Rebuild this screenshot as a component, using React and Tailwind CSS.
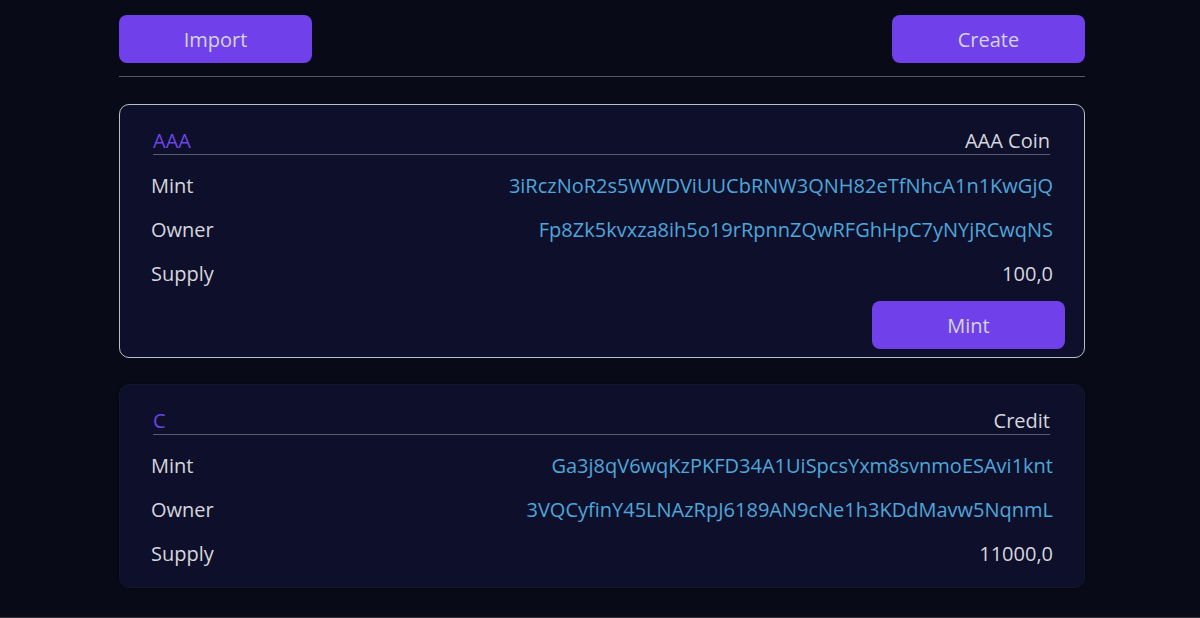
import React from "react";

const tokens = [
  {
    symbol: "AAA",
    name: "AAA Coin",
    mint: "3iRczNoR2s5WWDViUUCbRNW3QNH82eTfNhcA1n1KwGjQ",
    owner: "Fp8Zk5kvxza8ih5o19rRpnnZQwRFGhHpC7yNYjRCwqNS",
    supply: "100,0",
    canMint: true,
  },
  {
    symbol: "C",
    name: "Credit",
    mint: "Ga3j8qV6wqKzPKFD34A1UiSpcsYxm8svnmoESAvi1knt",
    owner: "3VQCyfinY45LNAzRpJ6189AN9cNe1h3KDdMavw5NqnmL",
    supply: "11000,0",
    canMint: false,
  },
];

function Row({ label, value, blue }) {
  return (
    <div className="flex h-[44px] items-center justify-between">
      <span className="text-[#d6d6de]">{label}</span>
      <span className={blue ? "text-[#4ea6db]" : "text-[#d6d6de]"}>{value}</span>
    </div>
  );
}

function Card({ t }) {
  return (
    <div
      className={
        "rounded-[10px] border bg-[#0e0f2a] " +
        (t.canMint ? "border-[#bdbdc6] pb-[8px]" : "border-[#15162c] pb-[11px] shadow-[0_0_3px_rgba(0,0,0,0.6)]")
      }
    >
      <div className="pl-[31px] pr-[31px]">
        <div className="ml-[2px] mr-[3px] flex items-center justify-between border-b border-[#5a5a6e] pb-[1px] pt-[24px] leading-[24px]">
          <span className="text-[#6a46e6]">{t.symbol}</span>
          <span className="text-[#d6d6de]">{t.name}</span>
        </div>
        <div className="mt-[9px]">
          <Row label="Mint" value={t.mint} blue />
          <Row label="Owner" value={t.owner} blue />
          <Row label="Supply" value={t.supply} />
        </div>
      </div>
      {t.canMint && (
        <div className="mt-[5px] flex justify-end pr-[19px]">
          <button className="h-[48px] w-[193px] rounded-lg bg-[#7041ea] pt-[2px] text-[#d4d4dc]">Mint</button>
        </div>
      )}
    </div>
  );
}

export default function App() {
  return (
    <div
      className="h-[618px] overflow-hidden border-b border-[#34343c] bg-[#080a17] pl-[119px] pt-[15px] text-[20px]"
      style={{ fontFamily: '"Open Sans", sans-serif' }}
    >
      <div className="w-[966px]">
        <div className="flex justify-between">
          <button className="h-[48px] w-[193px] rounded-lg bg-[#7041ea] pt-[2px] text-[#d4d4dc]">Import</button>
          <button className="h-[48px] w-[193px] rounded-lg bg-[#7041ea] pt-[2px] text-[#d4d4dc]">Create</button>
        </div>
        <div className="mt-[13px] h-px bg-[#5a5a62]" />
        <div className="mt-[27px] flex flex-col gap-[26px]">
          {tokens.map((t) => (
            <Card key={t.symbol} t={t} />
          ))}
        </div>
      </div>
    </div>
  );
}
